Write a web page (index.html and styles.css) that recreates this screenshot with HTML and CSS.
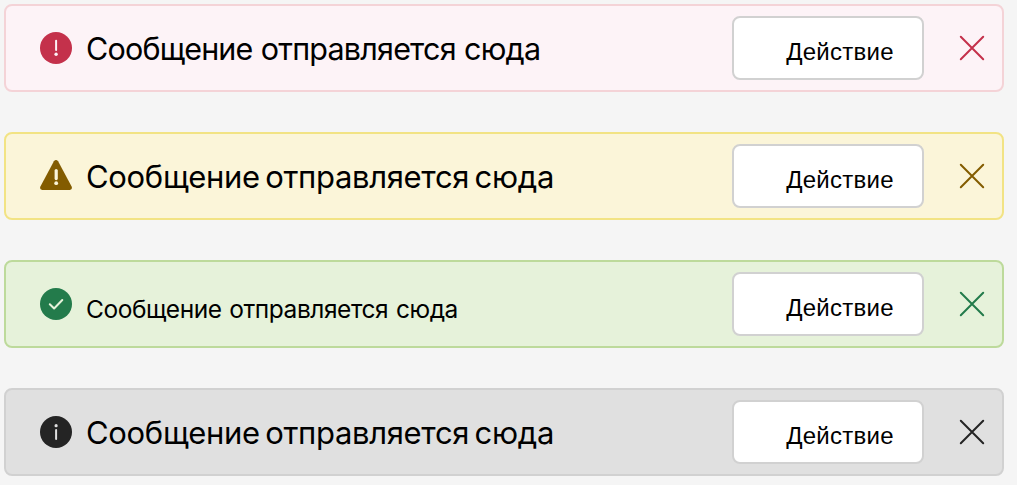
FILE: index.html
```html
<!DOCTYPE html>
<html lang="ru">
<head>
<meta charset="utf-8">
<title>Уведомления</title>
<link rel="stylesheet" href="styles.css">
</head>
<body>
<main class="stack">
  <section class="banner error">
    <svg class="icon" viewBox="0 0 32 32"><circle cx="16" cy="16" r="16" fill="currentColor"/><path class="mark" d="M16.1 8.8V18" stroke-width="2"/><circle class="dot" cx="16.1" cy="22.3" r="1.7"/></svg>
    <p class="message"><span>Сообщение отправляется сюда</span></p>
    <button class="action">Действие</button>
    <button class="close" aria-label="Закрыть"><svg viewBox="0 0 32 32"><path d="M4.8 4.8 27.2 27.2M27.2 4.8 4.8 27.2"/></svg></button>
  </section>
  <section class="banner warning">
    <svg class="icon" viewBox="0 0 32 32"><path fill="currentColor" d="M13.9 1.2Q16-1.2 18.1 1.2L31.6 26.4Q32.8 29.7 29.8 30H2.2Q-.8 29.7.4 26.4Z"/><path class="mark" d="M16.2 10.6V18.6" stroke-width="3.2"/><circle class="dot" cx="16.2" cy="23.2" r="1.9"/></svg>
    <p class="message"><span>Сообщение отправляется сюда</span></p>
    <button class="action">Действие</button>
    <button class="close" aria-label="Закрыть"><svg viewBox="0 0 32 32"><path d="M4.8 4.8 27.2 27.2M27.2 4.8 4.8 27.2"/></svg></button>
  </section>
  <section class="banner success">
    <svg class="icon" viewBox="0 0 32 32"><circle cx="16" cy="16" r="16" fill="currentColor"/><path class="mark" d="M9.8 16.2 14.1 20.5 22.3 12" stroke-width="2"/></svg>
    <p class="message"><span>Сообщение отправляется сюда</span></p>
    <button class="action">Действие</button>
    <button class="close" aria-label="Закрыть"><svg viewBox="0 0 32 32"><path d="M4.8 4.8 27.2 27.2M27.2 4.8 4.8 27.2"/></svg></button>
  </section>
  <section class="banner info">
    <svg class="icon" viewBox="0 0 32 32"><circle cx="16" cy="16" r="16" fill="currentColor"/><path class="mark" d="M16.1 14V23" stroke-width="2"/><circle class="dot" cx="16.1" cy="9.7" r="1.6"/></svg>
    <p class="message"><span>Сообщение отправляется сюда</span></p>
    <button class="action">Действие</button>
    <button class="close" aria-label="Закрыть"><svg viewBox="0 0 32 32"><path d="M4.8 4.8 27.2 27.2M27.2 4.8 4.8 27.2"/></svg></button>
  </section>
</main>
</body>
</html>
```
FILE: styles.css
```css
* { box-sizing: border-box; }
body {
  margin: 0;
  background: #f5f5f5;
  overflow: hidden;
  font-family: Inter, "Liberation Sans", sans-serif;
  color: #000;
}
.stack {
  display: flex;
  flex-direction: column;
  gap: 40px;
  width: 1004px;
  padding: 4px 0 0 4px;
}
.banner {
  display: flex;
  align-items: center;
  height: 88px;
  padding: 0 14px 0 34px;
  border: 2px solid;
  border-radius: 8px;
}
.error { background: #fdf3f7; border-color: #f4d3d7; --tone: #c4314b; --mark: #fdf3f7; }
.warning { background: #fbf5d9; border-color: #f2e384; --tone: #835c00; --mark: #fbf5d9; }
.success { background: #e6f2da; border-color: #bdda9b; --tone: #237b4b; --mark: #e6f2da; }
.info { background: #e0e0e0; border-color: #d1d1d1; --tone: #242424; --mark: #e0e0e0; }
.icon { width: 32px; height: 32px; flex: none; margin-right: 14px; color: var(--tone); }
.mark { fill: none; stroke: var(--mark); stroke-linecap: round; stroke-linejoin: round; }
.dot { fill: var(--mark); }
.message {
  flex: 1;
  margin: 0;
  padding: 1px 0 0;
  font-size: 31px;
  line-height: 40px;
  letter-spacing: -.32px;
  word-spacing: -3px;
  white-space: nowrap;
}
.error .message { font-size: 30.5px; letter-spacing: -.8px; word-spacing: .5px; }
.success .message { font-size: 24.5px; padding-top: 9px; letter-spacing: -.45px; word-spacing: 1.3px; }
.action {
  width: 192px;
  height: 64px;
  padding: 8px 0 0 24px;
  border: 2px solid #d1d1d1;
  border-radius: 8px;
  background: #fff;
  color: #000;
  font: 24px/30px "Liberation Sans", Arial, sans-serif;
  letter-spacing: .25px;
}
.close {
  display: flex;
  width: 32px;
  height: 32px;
  margin-left: 32px;
  padding: 0;
  border: 0;
  background: none;
}
.close svg { width: 32px; height: 32px; fill: none; stroke: var(--tone); stroke-width: 2; stroke-linecap: round; }
```
